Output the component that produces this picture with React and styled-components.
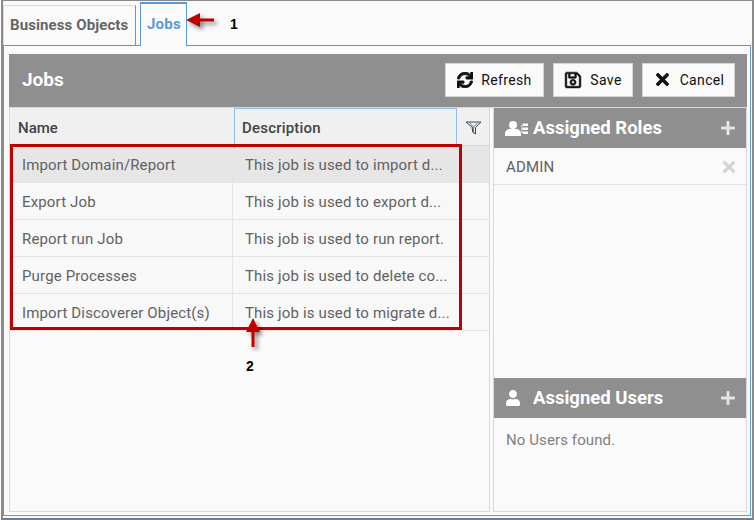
import React from "react";
import styled, { createGlobalStyle } from "styled-components";
import { FaSync, FaRegSave, FaTimes, FaPlus, FaUser } from "react-icons/fa";

const jobs = [
  ["Import Domain/Report", "This job is used to import d..."],
  ["Export Job", "This job is used to export d..."],
  ["Report run Job", "This job is used to run report."],
  ["Purge Processes", "This job is used to delete co..."],
  ["Import Discoverer Object(s)", "This job is used to migrate d..."],
];

function App() {
  return (
    <Page>
      <GlobalStyle />
      <TabBar>
        <Tab>Business Objects</Tab>
        <ActiveTab>Jobs</ActiveTab>
      </TabBar>
      <TabBody>
        <Panel>
          <Header>
            <Title>Jobs</Title>
            <Buttons>
              <ActionButton $w={99}><FaSync size={16} stroke="#111" strokeWidth={30} />Refresh</ActionButton>
              <ActionButton $w={80}><FaRegSave size={18} stroke="#111" strokeWidth={16} />Save</ActionButton>
              <ActionButton $w={93}><FaTimes size={19} />Cancel</ActionButton>
            </Buttons>
          </Header>
          <Columns>
            <Grid>
              <HeadRow>
                <NameHead>Name</NameHead>
                <DescHead>Description</DescHead>
                <FilterHead>
                  <svg width="17" height="14" viewBox="0 0 17 14" fill="none" strokeWidth="1">
                    <path d="M1 1h15l-5.500 5.500v6.500l-3-2V6.500z" stroke="#444" />
                    <path d="M4.500 1.500l4 4.500M13 1.500L8.500 6v5" stroke="#4a86c8" />
                    <path d="M6 6.500l2 2" stroke="#d0703a" />
                  </svg>
                </FilterHead>
              </HeadRow>
              {jobs.map((job, i) => (
                <Row key={job[0]} $selected={i === 0}>
                  <NameCell>{job[0]}</NameCell>
                  <DescCell>{job[1]}</DescCell>
                </Row>
              ))}
            </Grid>
            <Side>
              <SideBlock $h={270}>
                <SideHeader>
                  <SideTitle>
                    <svg width="23" height="15" viewBox="0 0 23 15" fill="#fff">
                      <circle cx="8" cy="4" r="4" />
                      <path d="M0 15v-2c0-3 2-5 5-5h6c3 0 5 2 5 5v2z" />
                      <path d="M18 2.500h5v2.500h-5zM18 6.500h5v2.500h-5zM18 10.500h5v2.500h-5z" />
                      <path d="M16.500 3.500h1.500v.8h-.7v3h.7v.8h-.7v3h.7v.8h-1.500z" />
                    </svg>
                    Assigned Roles
                  </SideTitle>
                  <FaPlus size={16} color="#e4e4e4" />
                </SideHeader>
                <RoleRow>
                  ADMIN
                  <FaTimes size={18} color="#d4d4d4" />
                </RoleRow>
              </SideBlock>
              <SideBlock>
                <SideHeader>
                  <SideTitle>
                    <FaUser size={16} />
                    <UserLabel>Assigned Users</UserLabel>
                  </SideTitle>
                  <FaPlus size={16} color="#e4e4e4" />
                </SideHeader>
                <EmptyText>No Users found.</EmptyText>
              </SideBlock>
            </Side>
          </Columns>
        </Panel>
      </TabBody>

      <TabMark />
      <GridMark />
      <Arrows width="754" height="520" viewBox="0 0 754 520">
        <defs>
          <filter id="soft" x="-30%" y="-30%" width="180%" height="180%">
            <feDropShadow dx="3" dy="3" stdDeviation="2" floodColor="#000" floodOpacity="0.45" />
          </filter>
        </defs>
        <g fill="#c00000" filter="url(#soft)">
          <path d="M186 20l14-7v5.500h14v3h-14v5.500z" />
          <path d="M253 318l-7 14h5.500v15h3v-15h5.500z" />
        </g>
      </Arrows>
      <Callout $x={230} $y={16}>1</Callout>
      <Callout $x={246} $y={358}>2</Callout>
    </Page>
  );
}

export default App;

const GlobalStyle = createGlobalStyle`
  html, body {
    margin: 0;
    padding: 0;
    background: #fff;
  }
  * { box-sizing: border-box; }
`;

const Page = styled.div`
  position: relative;
  width: 753px;
  height: 520px;
  margin-left: 1px;
  padding: 1px 1px 2px 0;
  background: #fafafa;
  border-top: 1px solid #8a8a8a;
  border-left: 2px solid #8a8a8a;
  border-bottom: 2px solid #6f7f8f;
  border-right: 2px solid #8a8a8a;
  font-family: Roboto, "Liberation Sans", sans-serif;
  overflow: hidden;
  display: flex;
  flex-direction: column;
`;

const TabBar = styled.div`
  display: flex;
  height: 43px;
  gap: 4px;
  align-items: flex-end;
  flex: none;
`;

const Tab = styled.div`
  width: 133px;
  height: 40px;
  border-right: 1px solid #8f8f8f;
  border-top: 1px solid #d8d8d8;
  border-left: 1px solid #d8d8d8;
  padding-left: 6px;
  font-size: 15px;
  font-weight: 700;
  line-height: 38px;
  letter-spacing: 0.1px;
  white-space: nowrap;
  color: #666;
  background: #fafafa;
`;

const ActiveTab = styled.div`
  width: 47px;
  height: 44px;
  margin-bottom: -1px;
  border: 1px solid #5b9bd5;
  border-top-width: 2px;
  border-bottom: none;
  background: #fafafa;
  padding-left: 6px;
  font-size: 15px;
  font-weight: 700;
  line-height: 41px;
  letter-spacing: 0.2px;
  color: #5b9bd5;
  position: relative;
  z-index: 1;
`;

const TabBody = styled.div`
  flex: 1;
  min-height: 0;
  border: 1px solid #5b9bd5;
  padding: 8px 3px 3px 5px;
  background: #fafafa;
`;

const Panel = styled.div`
  height: 100%;
  display: flex;
  flex-direction: column;
`;

const Header = styled.div`
  height: 53px;
  flex: none;
  background: #8f8f8f;
  display: flex;
  align-items: center;
  justify-content: space-between;
  padding: 0 12px 2px 13px;
`;

const Title = styled.div`
  font-size: 19px;
  font-weight: 700;
  color: #fff;
`;

const Buttons = styled.div`
  display: flex;
  gap: 9px;
`;

const ActionButton = styled.button`
  width: ${(p) => p.$w}px;
  height: 34px;
  display: flex;
  align-items: center;
  justify-content: center;
  gap: 8px;
  padding: 0;
  background: #fafafa;
  border: 1px solid #d4d4d4;
  font-family: Roboto, "Liberation Sans", sans-serif;
  font-size: 14px;
  letter-spacing: 0.35px;
  color: #111;
  svg { color: #111; }
`;

const Columns = styled.div`
  flex: 1;
  min-height: 0;
  display: flex;
  gap: 3px;
  border-top: 1px solid #d8d8d8;
`;

const Grid = styled.div`
  width: 481px;
  flex: none;
  border: 1px solid #d8d8d8;
  border-top: none;
`;

const HeadRow = styled.div`
  display: grid;
  grid-template-columns: 224px 223px 1fr;
  height: 38px;
  background: #f0f0f0;
  border-bottom: 1px solid #d8d8d8;
`;

const NameHead = styled.div`
  padding-left: 8px;
  font-size: 15px;
  font-weight: 500;
  line-height: 40px;
  color: #444;
`;

const DescHead = styled(NameHead)`
  border: 1px solid #8fbce6;
  border-bottom: none;
  padding-left: 7px;
  letter-spacing: 0.2px;
  line-height: 38px;
`;

const FilterHead = styled.div`
  display: flex;
  align-items: center;
  justify-content: center;
`;

const Row = styled.div`
  display: grid;
  grid-template-columns: 223px 1fr;
  height: 37px;
  background: ${(p) => (p.$selected ? "#e6e6e6" : "#f8f8f8")};
  border-bottom: 1px solid #e4e4e4;
`;

const NameCell = styled.div`
  padding-left: 12px;
  font-size: 15px;
  line-height: 38px;
  letter-spacing: 0.15px;
  color: #626262;
  border-right: 1px solid #e4e4e4;
  white-space: nowrap;
`;

const DescCell = styled(NameCell)`
  border-right: none;
`;

const Side = styled.div`
  flex: 1;
  min-width: 0;
  display: flex;
  flex-direction: column;
  border: 1px solid #d8d8d8;
  border-top: none;
`;

const SideBlock = styled.div`
  ${(p) => (p.$h ? `height: ${p.$h}px; flex: none;` : "flex: 1;")}
`;

const SideHeader = styled.div`
  height: 40px;
  background: #8f8f8f;
  display: flex;
  align-items: center;
  justify-content: space-between;
  padding: 0 10px 0 11px;
`;

const SideTitle = styled.div`
  display: flex;
  align-items: center;
  gap: 5px;
  font-size: 18.5px;
  font-weight: 700;
  color: #fff;
`;

const UserLabel = styled.span`
  margin-left: 7px;
`;

const RoleRow = styled.div`
  height: 37px;
  display: flex;
  align-items: center;
  justify-content: space-between;
  padding: 1px 8px 0 12px;
  font-size: 15px;
  letter-spacing: 0.15px;
  color: #626262;
  border-bottom: 1px solid #e4e4e4;
`;

const EmptyText = styled.div`
  padding: 13px 12px;
  font-size: 15px;
  letter-spacing: 0.1px;
  color: #808080;
`;

const TabMark = styled.div`
  position: absolute;
  left: 140px;
  top: 7px;
  width: 43px;
  height: 32px;
  border: 3px solid #c00000;
`;

const GridMark = styled.div`
  position: absolute;
  left: 7px;
  top: 143px;
  width: 452px;
  height: 186px;
  border: 3px solid #c00000;
`;

const Arrows = styled.svg`
  position: absolute;
  left: -3px;
  top: -1px;
  pointer-events: none;
`;

const Callout = styled.div`
  position: absolute;
  left: ${(p) => p.$x - 3}px;
  top: ${(p) => p.$y - 1}px;
  font-family: "Liberation Sans", Arial, sans-serif;
  font-size: 14px;
  font-weight: 700;
  color: #000;
`;
